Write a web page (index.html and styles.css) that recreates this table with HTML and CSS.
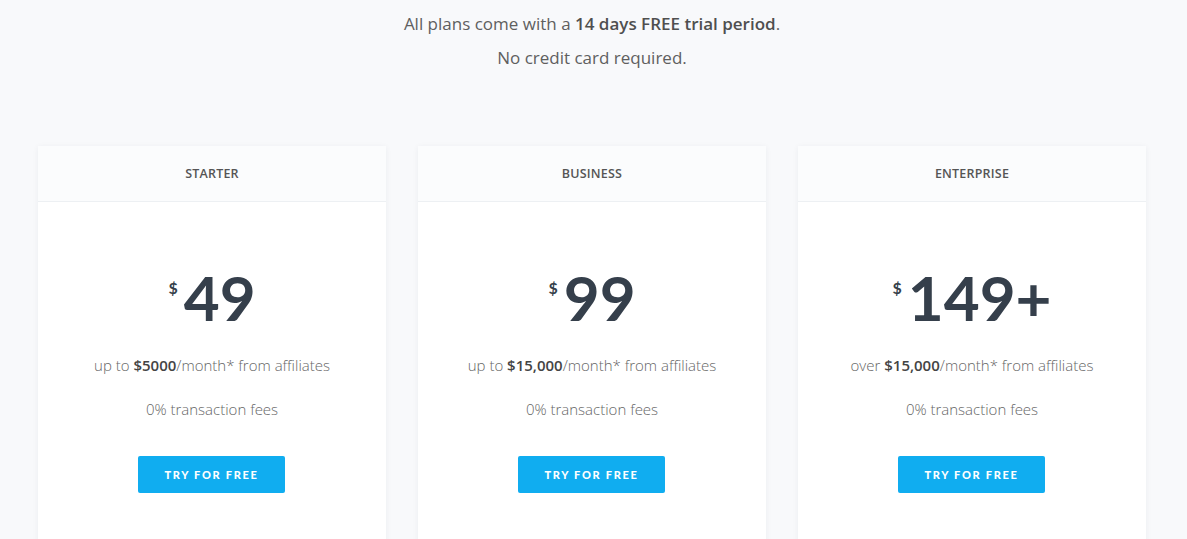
FILE: index.html
```html
<!DOCTYPE html>
<html>
<head>
<meta charset="utf-8">
<link rel="stylesheet" href="styles.css">
</head>
<body>
<section class="pricing">
  <div class="intro">
    <p>All plans come with a <strong>14 days FREE trial period</strong>.</p>
    <p>No credit card required.</p>
  </div>
  <div class="plans">
    <div class="plan">
      <div class="plan-head">STARTER</div>
      <div class="plan-body">
        <div class="price"><span class="cur">$</span><span class="amt">49</span></div>
        <p class="line">up to <strong>$5000</strong>/month* from affiliates</p>
        <p class="line">0% transaction fees</p>
        <a class="btn">TRY FOR FREE</a>
      </div>
    </div>
    <div class="plan">
      <div class="plan-head">BUSINESS</div>
      <div class="plan-body">
        <div class="price"><span class="cur">$</span><span class="amt">99</span></div>
        <p class="line">up to <strong>$15,000</strong>/month* from affiliates</p>
        <p class="line">0% transaction fees</p>
        <a class="btn">TRY FOR FREE</a>
      </div>
    </div>
    <div class="plan">
      <div class="plan-head">ENTERPRISE</div>
      <div class="plan-body">
        <div class="price"><span class="cur">$</span><span class="amt">149+</span></div>
        <p class="line">over <strong>$15,000</strong>/month* from affiliates</p>
        <p class="line">0% transaction fees</p>
        <a class="btn">TRY FOR FREE</a>
      </div>
    </div>
  </div>
</section>
</body>
</html>
```
FILE: styles.css
```css
html, body {
  margin: 0;
  padding: 0;
  background: #f8f9fb;
  font-family: "Open Sans", "Liberation Sans", sans-serif;
  overflow: hidden;
}
.pricing {
  padding: 7px 0 0 38px;
  width: 1108px;
}
.intro {
  text-align: center;
  color: #5f5f5f;
  font-size: 17px;
  line-height: 34px;
}
.intro p { margin: 0; }
.intro strong { font-weight: 600; color: #4f4f4f; }
.plans {
  margin-top: 71px;
  display: grid;
  grid-template-columns: repeat(3, 348px);
  column-gap: 32px;
}
.plan {
  background: #fff;
  height: 420px;
  box-shadow: 0 1px 6px rgba(40, 50, 70, 0.06);
}
.plan-head {
  height: 55px;
  line-height: 55px;
  text-align: center;
  background: #fbfcfd;
  border-bottom: 1px solid #edf0f3;
  font-size: 12.5px;
  font-weight: 600;
  color: #555;
  letter-spacing: 0.2px;
}
.plan-body {
  display: flex;
  flex-direction: column;
  align-items: center;
  padding-top: 56px;
}
.price {
  display: flex;
  align-items: flex-start;
  font-family: Lato, "Liberation Sans", sans-serif;
  color: #353f4b;
  font-weight: 700;
  height: 78px;
}
.cur {
  font-size: 16px;
  margin-top: 20px;
  margin-right: 6px;
}
.amt {
  font-size: 62px;
  line-height: 78px;
}
.line {
  margin: 0;
  font-size: 15px;
  font-weight: 300;
  color: #666;
  line-height: 22px;
}
.price + .line { margin-top: 18px; }
.line + .line { margin-top: 22px; }
.line strong { font-weight: 600; color: #444; }
.btn {
  margin-top: 36px;
  margin-right: 1px;
  width: 147px;
  height: 37px;
  line-height: 37px;
  text-align: center;
  background: #10adf0;
  border-radius: 2px;
  color: #fff;
  font-family: Lato, "Liberation Sans", sans-serif;
  font-weight: 900;
  font-size: 11px;
  letter-spacing: 1.7px;
}
```
